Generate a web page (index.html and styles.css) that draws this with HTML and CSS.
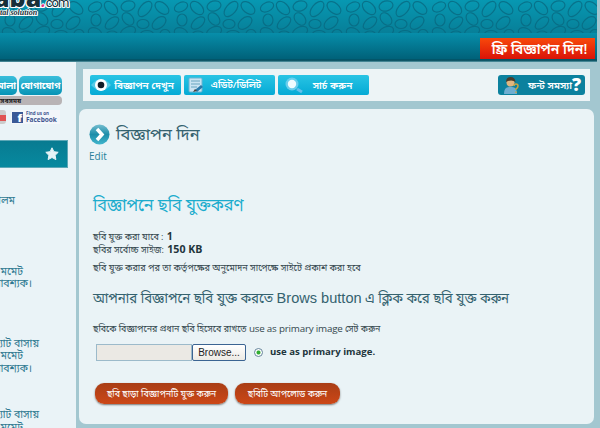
FILE: index.html
```html
<!DOCTYPE html>
<html lang="bn">
<head>
  <meta charset="UTF-8" />
  <title>বিজ্ঞাপন দিন</title>
  <link rel="stylesheet" href="styles.css">
</head>
<body>

<header class="banner">
  <svg class="pebbles" width="597" height="34">
    <defs>
      <pattern id="stones" width="86" height="40" patternUnits="userSpaceOnUse">
        <g fill="none" stroke="#07677f" stroke-width="1.2">
          <ellipse cx="9" cy="7" rx="7" ry="4.5" transform="rotate(-25 9 7)" />
          <ellipse cx="25" cy="8" rx="8" ry="5" transform="rotate(45 25 8)" />
          <ellipse cx="42" cy="6" rx="7" ry="5" transform="rotate(-15 42 6)" />
          <ellipse cx="59" cy="9" rx="9" ry="5" transform="rotate(-50 59 9)" />
          <ellipse cx="76" cy="8" rx="8" ry="5" transform="rotate(40 76 8)" />
          <ellipse cx="10" cy="20" rx="5" ry="6" />
          <ellipse cx="26" cy="23" rx="8" ry="4.5" transform="rotate(-40 26 23)" />
          <ellipse cx="42" cy="19" rx="7" ry="5" transform="rotate(50 42 19)" />
          <ellipse cx="57" cy="24" rx="6" ry="4.5" />
          <ellipse cx="73" cy="23" rx="8" ry="5" transform="rotate(-40 73 23)" />
          <ellipse cx="9" cy="33" rx="7" ry="5" transform="rotate(25 9 33)" />
          <ellipse cx="26" cy="35" rx="6" ry="4" />
          <ellipse cx="42" cy="32" rx="8" ry="5" transform="rotate(-25 42 32)" />
          <ellipse cx="61" cy="35" rx="7" ry="4.5" />
          <ellipse cx="79" cy="34" rx="5" ry="4.5" />
        </g>
      </pattern>
    </defs>
    <rect width="597" height="34" fill="url(#stones)" />
  </svg>
  <div class="logo">
    <div class="name"><b>aba</b><i>.</i><span>com</span></div>
    <em>tal solution</em>
  </div>
</header>

<nav class="navbar">
  <a class="post-ad">ফ্রি বিজ্ঞাপন দিন!</a>
</nav>

<div class="page">
  <aside class="sidebar">
    <div class="tabs">
      <a class="tab first">মালা</a>
      <a class="tab">যোগাযোগ</a>
    </div>
    <div class="strip">সবসময়</div>
    <div class="social">
      <span class="yt"></span>
      <span class="fb">
        <b>f</b>
        <span><small>Find us on</small>Facebook</span>
      </span>
    </div>
    <div class="side-head">
      <svg width="14" height="14" viewBox="0 0 14 14"><path d="M7 .8l1.900 3.900 4.300.6-3.100 3 .8 4.300L7 10.500l-3.900 2.100.8-4.300-3.100-3 4.300-.6z" fill="#e4f3f7" stroke="#e4f3f7" stroke-linejoin="round" /></svg>
    </div>
    <div class="note one"><span class="w15">আলম</span></div>
    <div class="note two"><span class="w23">মমেট</span><span class="w32">আবশ্যক।</span></div>
    <div class="note three"><span class="w39">ফ্ল্যাট বাসায়</span><span class="w23">মমেট</span><span class="w32">আবশ্যক।</span></div>
    <div class="note four"><span class="w39">ফ্ল্যাট বাসায়</span><span class="w23">মমেট</span></div>
  </aside>

  <main class="main">
    <div class="toolbar">
      <a class="tool view">
        <svg width="22" height="18"><path d="M1 9Q11-3 21 9Q11 20 1 9" fill="#58cbe7" /><circle cx="11" cy="9" r="6" fill="#fff" /><circle cx="11" cy="9" r="3.300" fill="#111c28" /></svg>
        <span>বিজ্ঞাপন দেখুন</span>
      </a>
      <a class="tool edit">
        <svg width="18" height="18"><rect x="2" y="2" width="13" height="14" rx="1" fill="#c9e3f2" stroke="#6db4d1" /><path d="M4 5h9M4 8h9M4 11h6" stroke="#68a5bf" /><path d="M8 14l6-5 2 2-6 5z" fill="#2879aa" /><path d="M6 16l2-3 2 2z" fill="#47413b" /></svg>
        <span>এডিট/ডিলিট</span>
      </a>
      <a class="tool search">
        <svg width="20" height="18"><circle cx="8" cy="8" r="6.500" fill="#69ceed" /><circle cx="8" cy="8" r="4.200" fill="#effcff" /><path d="M13 13l5 3" stroke="#65bfeb" stroke-width="3" /></svg>
        <span>সার্চ করুন</span>
      </a>
      <a class="tool font-help">
        <svg width="17" height="18"><path d="M0 18q0-7 5-7h3q5 0 5 7z" fill="#6faed1" /><circle cx="6.500" cy="6.500" r="4" fill="#e1b680" /><path d="M2 6q0-5 4.500-5t5 5q-4-3-9.500 0" fill="#4b3d2c" /><path d="M10 10q0-2 2-2t2 2-2 3v1M12 15.500v1.500" fill="none" stroke="#c9a441" stroke-width="1.500" /></svg>
        <span>ফন্ট সমস্যা</span><b>?</b>
      </a>
    </div>

    <section class="content">
      <div class="title">
        <svg width="21" height="21" viewBox="0 0 21 21"><defs><linearGradient id="orb" x2="0" y2="1"><stop stop-color="#75bed0" /><stop offset=".5" stop-color="#1d8da9" /><stop offset="1" stop-color="#42b6cd" /></linearGradient></defs><circle cx="10.500" cy="10.500" r="10" fill="url(#orb)" /><path d="M8 5l5 5.500L8 16" fill="none" stroke="#fff" stroke-width="3.500" /></svg>
        <h1>বিজ্ঞাপন দিন</h1>
      </div>
      <a class="edit-link">Edit</a>

      <h2>বিজ্ঞাপনে ছবি যুক্তকরণ</h2>
      <p class="limits">ছবি যুক্ত করা যাবে : <b>1</b><br>ছবির সর্বোচ্চ সাইজ: <b>150 KB</b></p>
      <p class="approve">ছবি যুক্ত করার পর তা কর্তৃপক্ষের অনুমোদন সাপেক্ষে সাইটে প্রকাশ করা হবে</p>
      <h3>আপনার বিজ্ঞাপনে ছবি যুক্ত করতে <span>Brows button</span> এ ক্লিক করে ছবি যুক্ত করুন</h3>
      <p class="hint">ছবিকে বিজ্ঞাপনের প্রধান ছবি হিসেবে রাখতে <span>use as primary image</span> সেট করুন</p>

      <div class="upload">
        <span class="file-name"></span>
        <button class="browse">Browse...</button>
        <span class="radio"></span>
        <label>use as primary image.</label>
      </div>

      <div class="actions">
        <button class="pill skip">ছবি ছাড়া বিজ্ঞাপনটি যুক্ত করুন</button>
        <button class="pill send">ছবিটি আপলোড করুন</button>
      </div>
    </section>
  </main>
</div>

</body>
</html>
```
FILE: styles.css
```css
* {
  box-sizing: border-box;
}

body {
  margin: 0;
  height: 428px;
  overflow: hidden;
  background: #a3c7d0;
  color: #34474e;
  font-family: "Open Sans", "Noto Sans Bengali", sans-serif;
}

h1, h2, h3, p {
  margin: 0;
  font-weight: normal;
  white-space: nowrap;
}

button {
  margin: 0;
  padding: 0;
}

.banner {
  position: relative;
  width: 597px;
  height: 33px;
  overflow: hidden;
  background: linear-gradient(#0798b2, #077f98);
}

.pebbles {
  display: block;
  opacity: 0.75;
}

.logo {
  position: absolute;
  left: -6px;
  top: -17px;
  color: #173039;
  white-space: nowrap;
  text-shadow: 1px 0 #fff, -1px 0 #fff, 0 1px #fff, 0 -1px #fff, 1px 1px #fff, -1px 1px #fff;
}

.name {
  display: flex;
  align-items: baseline;
  height: 25px;
  line-height: 28px;
}

.logo b {
  font-size: 25px;
  font-weight: 800;
}

.logo i {
  color: #e22e83;
  font-size: 16px;
  font-weight: bold;
}

.logo span {
  font: 400 13px "Roboto", sans-serif;
  letter-spacing: -1px;
}

.logo em {
  display: block;
  padding-left: 6px;
  font: italic bold 8px/9px "Liberation Serif", serif;
}

.navbar {
  display: flex;
  justify-content: flex-end;
  width: 597px;
  height: 29px;
  padding: 5px 2px 0 0;
  background: linear-gradient(#078eaa, #00627a 88%, #034b5c 94%, #5d9ba9);
}

.post-ad {
  width: 115px;
  height: 21px;
  padding-left: 4px;
  background: linear-gradient(#f8490b, #da1308);
  color: #fff;
  font-size: 14px;
  font-weight: 600;
  line-height: 21px;
  text-align: center;
  white-space: nowrap;
}

.page {
  display: flex;
  height: 366px;
}

.sidebar {
  flex: none;
  width: 76px;
  overflow: hidden;
  background: #eaf3f7;
}

.tabs {
  display: flex;
  gap: 2px;
  margin-top: 14px;
}

.tab {
  width: 43px;
  height: 19px;
  border-radius: 5px;
  background: linear-gradient(#3abedb, #0793b5);
  color: #fff;
  font-size: 9.4px;
  font-weight: bold;
  line-height: 19px;
  text-align: center;
  white-space: nowrap;
}

.tab.first {
  display: flex;
  justify-content: flex-end;
  width: 17px;
  padding-right: 1px;
  border-radius: 0 5px 5px 0;
}

.strip {
  width: 62px;
  height: 9px;
  margin-top: 1px;
  border-radius: 0 4px 4px 0;
  background: #b8b3b5;
  color: #222;
  font-size: 6.8px;
  font-weight: bold;
  line-height: 9px;
}

.social {
  display: flex;
  gap: 5px;
  height: 16px;
  margin-top: 5px;
}

.yt {
  width: 6px;
  height: 14px;
  border-radius: 0 3px 3px 0;
  background: linear-gradient(#ccc 35%, #e05353 35%, #e05353 75%, #ccc 75%);
}

.fb {
  display: flex;
  align-items: center;
  gap: 3px;
  width: 49px;
  height: 14px;
  padding-left: 1px;
  background: #f3f6fa;
  color: #3e5590;
  font: bold 6.5px/7px "Open Sans", sans-serif;
}

.fb b {
  flex: none;
  width: 11px;
  height: 11px;
  padding-right: 1px;
  background: #3a5997;
  color: #fff;
  font-size: 11px;
  line-height: 12px;
  text-align: right;
}

.fb small {
  display: block;
  font-size: 4.5px;
  line-height: 5px;
}

.side-head {
  display: flex;
  align-items: center;
  justify-content: flex-end;
  width: 68px;
  height: 28px;
  margin-top: 14px;
  padding-right: 8px;
  border: 1px solid #5ca7b6;
  border-left: 0;
  background: linear-gradient(#087b91, #07899f);
}

.note {
  color: #2d7890;
  font-size: 10.5px;
  line-height: 12.5px;
}

.note span {
  display: flex;
  justify-content: flex-end;
  white-space: nowrap;
}

/* ticker lines run out past the left edge */
.w15 { width: 15px; }
.w23 { width: 23px; }
.w32 { width: 32px; }
.w39 { width: 39px; }

.one { margin-top: 26px; }
.two { margin-top: 58px; }
.three { margin-top: 47px; }
.four { margin-top: 34px; }

.main {
  display: flex;
  flex-direction: column;
  gap: 8px;
  width: 515px;
  margin-left: 3px;
  padding-top: 7px;
}

.toolbar {
  display: flex;
  gap: 3px;
  width: 507px;
  height: 32px;
  margin-left: 4px;
  padding: 6px 5px 6px 7px;
  background: #edf4f6;
}

.tool {
  display: flex;
  align-items: center;
  height: 20px;
  border-radius: 2px;
  background: linear-gradient(#29c4e4, #05aad5);
  color: #fff;
  font-size: 10px;
  font-weight: 600;
  line-height: 20px;
  white-space: nowrap;
}

.tool span {
  flex: 1;
  text-align: center;
}

.view { width: 91px; padding-right: 5px; }
.edit { width: 91px; padding: 0 8px 0 3px; font-size: 9.6px; }
.search { width: 91px; padding: 0 8px 0 6px; }

.font-help {
  width: 87px;
  margin-left: auto;
  padding: 0 4px 0 6px;
  border-radius: 3px;
  background: #0c819e;
  font-size: 10px;
}

.font-help span {
  text-align: right;
}

.font-help b {
  font-size: 18px;
  line-height: 16px;
  margin-bottom: 3px;
}

.content {
  width: 515px;
  height: 315px;
  padding: 15px 11px 0 14px;
  border-radius: 7px;
  background: #eaf3f6;
}

.title {
  display: flex;
  align-items: center;
  gap: 6px;
  height: 21px;
  margin-left: -4px;
}

h1 {
  color: #34626f;
  font-size: 16.5px;
}

.edit-link {
  display: block;
  margin: 4px 0 0 -4px;
  color: #277f98;
  font-size: 10px;
  line-height: 14px;
}

h2 {
  margin-top: 29px;
  color: #1baccd;
  font-size: 17.8px;
  line-height: 24px;
  transform: scaleX(0.91);
  transform-origin: left;
}

.limits {
  margin-top: 14px;
  font-size: 9px;
  line-height: 12px;
}

.limits b {
  padding-left: 1px;
  color: #22353c;
  font-size: 10.6px;
}

.approve {
  margin-top: 6px;
  font-size: 9.1px;
  line-height: 12px;
}

h3 {
  margin-top: 12px;
  color: #34626f;
  font-size: 14px;
  line-height: 24px;
  transform: scaleX(0.946);
  transform-origin: left;
}

h3 span {
  font: 15.4px "Liberation Sans", sans-serif;
}

.hint {
  margin-top: 12px;
  font-size: 8.9px;
  line-height: 14px;
}

.hint span {
  font-size: 9.8px;
  letter-spacing: -0.2px;
}

.upload {
  display: flex;
  align-items: flex-start;
  height: 17px;
  margin: 8px 0 0 3px;
}

.file-name {
  width: 96px;
  height: 17px;
  border: 1px solid #9cbaca;
  background: #ebe9e4;
}

.browse {
  width: 54px;
  height: 17px;
  border: 1px solid #3b6492;
  border-radius: 2px;
  background: linear-gradient(#fff, #eceae4);
  color: #222;
  font: 10px/14px "Liberation Sans", sans-serif;
}

.radio {
  width: 9px;
  height: 9px;
  margin: 4px 7px 0 8px;
  border: 1px solid #66859b;
  border-radius: 50%;
  background: radial-gradient(#32ad32 0 1.5px, #fff 2.5px);
}

.upload label {
  color: #22353c;
  font-size: 9.6px;
  font-weight: bold;
  line-height: 15px;
}

.actions {
  display: flex;
  gap: 7px;
  margin: 22px 0 0 2px;
}

.pill {
  height: 21px;
  border: 0;
  border-radius: 9px;
  background: linear-gradient(#a93e16, #cc4717);
  box-shadow: 0 1px 2px #777;
  color: #fff;
  font: 8.9px/21px "Open Sans", "Noto Sans Bengali", sans-serif;
  white-space: nowrap;
}

.skip { width: 133px; }
.send { width: 105px; }
```
